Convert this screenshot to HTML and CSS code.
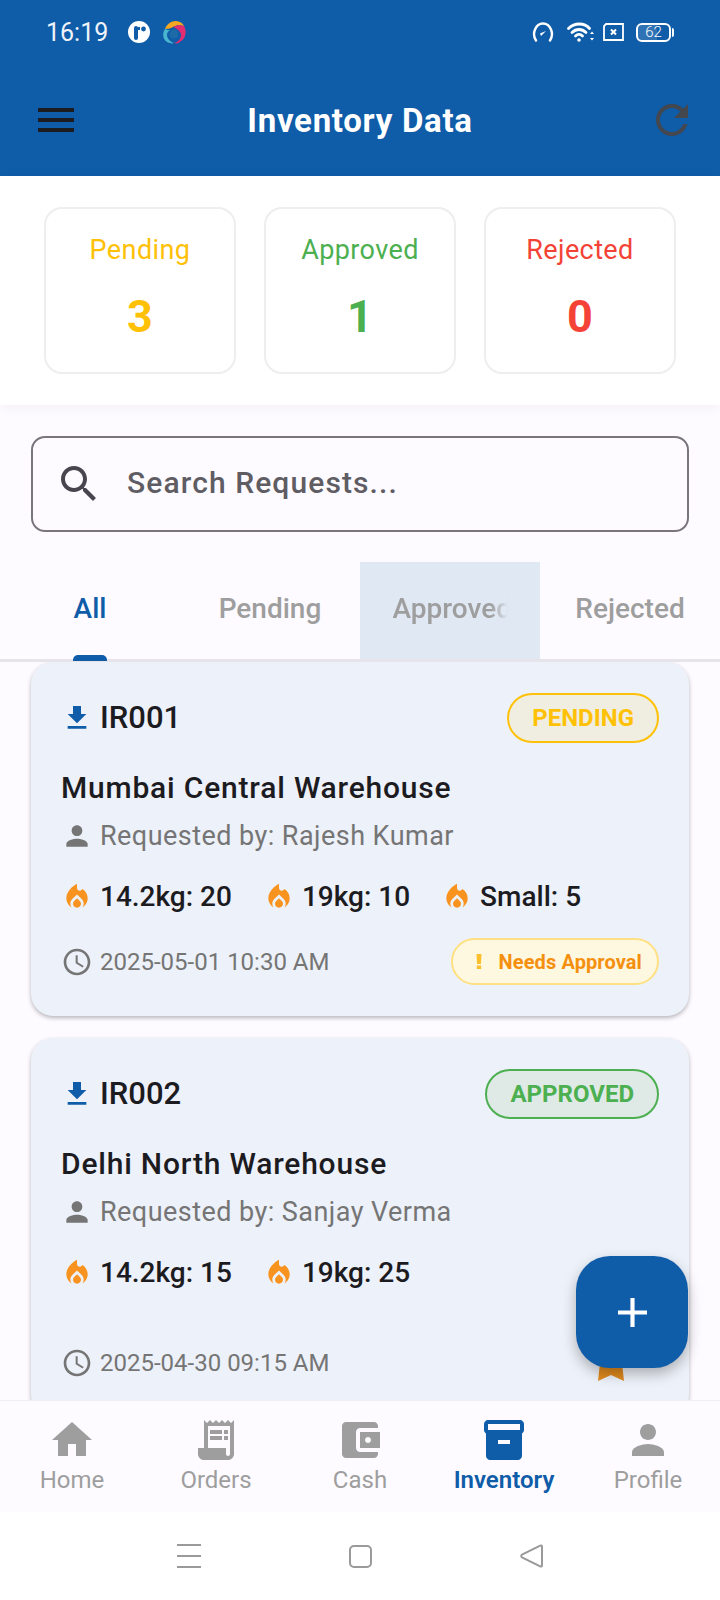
FILE: index.html
```html
<!DOCTYPE html>
<html lang="en">

<head>
  <meta charset="UTF-8" />
  <meta name="viewport" content="width=device-width, initial-scale=1.0" />
  <title>Inventory Data</title>
  <link rel="stylesheet" href="styles.css">
</head>

<body>
  <div class="phone">
    <header class="header">
      <div class="status-bar">
        <span class="status-time">16:19</span>
        <svg class="status-app" viewBox="0 0 22 22">
          <circle cx="11" cy="11" r="11" fill="#fff" />
          <rect x="6" y="5" width="4" height="14" rx="2" fill="#0f5ca8" />
          <path d="M10 6h2v3h-2z" fill="#0f5ca8" />
          <circle cx="15.5" cy="8" r="2.4" fill="#0f5ca8" />
        </svg>
        <svg class="status-app status-app-color" viewBox="0 0 24 24">
          <path d="M3 9C5 3 12-1 18 2c2 1 3 2 4 4-4-1-8-1-11 1-2 1-4 2-8 2z" fill="#f5a623" />
          <path d="M22 6c3 5 2 12-3 15-2 2-4 3-7 2 4-1 7-4 7-8 0-3-3-6-8-8 4-2 8-2 11-1z" fill="#e32d73" />
          <path d="M3 9c-4 6-1 13 5 14 1 .5 3 .5 4 0-3-1-7-4-7-8 0-2 1-4 3-5-2 0-3 0-5-1z" fill="#49b6d0" />
          <circle cx="12" cy="14" r="4.500" fill="#1c6aa6" />
        </svg>
        <div class="status-right">
          <svg class="status-icon status-gauge" viewBox="0 0 22 20" fill="none" stroke="#fff" stroke-width="2.400">
            <path d="M4 18.500C-.5 12 3.500 1.500 11 1.500S22.500 12 18 18.500" stroke-linecap="round" />
            <path d="M8 11.500l6-2.500-5 5z" fill="#fff" stroke="none" />
          </svg>
          <svg class="status-icon status-wifi" viewBox="0 0 28 20" fill="none" stroke="#fff" stroke-width="2.800" stroke-linecap="round">
            <path d="M1.500 6.500c6-6 16-6 21 0" />
            <path d="M5 10.500c4-4 10-4 14 0" />
            <path d="M8.500 14c2-2 5-2 7 0" />
            <circle cx="12" cy="18" r="1.800" fill="#fff" stroke="none" />
            <path d="M25 9.500l2 2.500h-4zM25 18.500l2-2.500h-4z" fill="#fff" stroke="none" />
          </svg>
          <svg class="status-icon status-box" viewBox="0 0 21 18" fill="none" stroke="#fff" stroke-width="1.800">
            <path d="M3 1h17v16H1V3z" />
            <path d="M8 6.500l5 5M13 6.500l-5 5" stroke-width="2" />
          </svg>
          <div class="battery">
            <div class="battery-body">
              <span class="battery-fill"></span>
              <span class="battery-text">62</span>
            </div>
            <span class="battery-tip"></span>
          </div>
        </div>
      </div>
      <div class="app-bar">
        <svg class="icon-48 icon-menu" viewBox="0 0 24 24"><path d="M3 18h18v-2H3v2zm0-5h18v-2H3v2zm0-7v2h18V6H3z" /></svg>
        <h1>Inventory Data</h1>
        <svg class="icon-48 icon-refresh" viewBox="0 0 24 24"><path d="M17.650 6.350C16.200 4.900 14.210 4 12 4c-4.420 0-7.990 3.580-7.990 8s3.570 8 7.990 8c3.730 0 6.840-2.550 7.730-6h-2.080c-.82 2.330-3.040 4-5.650 4-3.310 0-6-2.690-6-6s2.690-6 6-6c1.660 0 3.140.69 4.220 1.780L13 11h7V4l-2.350 2.350z" /></svg>
      </div>
    </header>

    <section class="stats">
      <div class="stat stat-pending">
        <span class="stat-label">Pending</span>
        <strong class="stat-value">3</strong>
      </div>
      <div class="stat stat-approved">
        <span class="stat-label">Approved</span>
        <strong class="stat-value">1</strong>
      </div>
      <div class="stat stat-rejected">
        <span class="stat-label">Rejected</span>
        <strong class="stat-value">0</strong>
      </div>
    </section>

    <div class="search">
      <svg class="icon-48 icon-search" viewBox="0 0 24 24"><path d="M15.500 14h-.79l-.28-.27C15.410 12.590 16 11.110 16 9.500 16 5.910 13.090 3 9.500 3S3 5.910 3 9.500 5.910 16 9.500 16c1.610 0 3.090-.59 4.230-1.570l.27.28v.79l5 4.990L20.490 19l-4.990-5zm-6 0C7.010 14 5 11.990 5 9.500S7.010 5 9.500 5 14 7.010 14 9.500 11.990 14 9.500 14z" /></svg>
      <span class="search-text">Search Requests...</span>
    </div>

    <nav class="tabs">
      <div class="tab tab-active"><span>All</span><i class="tab-indicator"></i></div>
      <div class="tab"><span>Pending</span></div>
      <div class="tab tab-pressed"><span class="tab-fade">Approved</span></div>
      <div class="tab"><span>Rejected</span></div>
    </nav>

    <main class="list">
      <article class="card">
        <div class="card-top">
          <div class="card-id">
            <svg class="icon-32 icon-primary" viewBox="0 0 24 24"><path d="M19 9h-4V3H9v6H5l7 7 7-7zM5 18v2h14v-2H5z" /></svg>
            <span>IR001</span>
          </div>
          <span class="status-badge badge-pending">PENDING</span>
        </div>
        <h2 class="card-title">Mumbai Central Warehouse</h2>
        <div class="card-line">
          <svg class="icon-32 icon-grey" viewBox="0 0 24 24"><path d="M12 12c2.210 0 4-1.790 4-4s-1.790-4-4-4-4 1.790-4 4 1.790 4 4 4zm0 2c-2.670 0-8 1.340-8 4v2h16v-2c0-2.660-5.330-4-8-4z" /></svg>
          <span>Requested by: Rajesh Kumar</span>
        </div>
        <div class="cylinders">
          <div class="cylinder">
            <svg class="icon-32 icon-flame" viewBox="0 0 24 24"><path d="M12 12.900l-2.130 2.090C9.310 15.550 9 16.280 9 17.060 9 18.680 10.350 20 12 20s3-1.320 3-2.940c0-.78-.31-1.520-.87-2.070L12 12.900z" /><path d="M16 6l-.44.55C14.380 8.020 12 7.190 12 5.300V2S4 6 4 13c0 2.920 1.560 5.470 3.890 6.860-.56-.79-.89-1.760-.89-2.800 0-1.320.52-2.560 1.470-3.500L12 10.100l3.530 3.470c.95.93 1.470 2.170 1.470 3.500 0 1.020-.31 1.960-.85 2.750 1.890-1.150 3.290-3.060 3.710-5.300.66-3.510-1.020-6.760-3.860-8.520z" /></svg>
            <span>14.2kg: 20</span>
          </div>
          <div class="cylinder">
            <svg class="icon-32 icon-flame" viewBox="0 0 24 24"><path d="M12 12.900l-2.130 2.090C9.310 15.550 9 16.280 9 17.060 9 18.680 10.350 20 12 20s3-1.320 3-2.940c0-.78-.31-1.520-.87-2.070L12 12.900z" /><path d="M16 6l-.44.55C14.380 8.020 12 7.190 12 5.300V2S4 6 4 13c0 2.920 1.560 5.470 3.890 6.860-.56-.79-.89-1.760-.89-2.800 0-1.320.52-2.560 1.470-3.500L12 10.100l3.530 3.470c.95.93 1.470 2.170 1.470 3.500 0 1.020-.31 1.960-.85 2.750 1.890-1.150 3.290-3.060 3.710-5.300.66-3.510-1.020-6.760-3.860-8.520z" /></svg>
            <span>19kg: 10</span>
          </div>
          <div class="cylinder">
            <svg class="icon-32 icon-flame" viewBox="0 0 24 24"><path d="M12 12.900l-2.130 2.090C9.310 15.550 9 16.280 9 17.060 9 18.680 10.350 20 12 20s3-1.320 3-2.940c0-.78-.31-1.520-.87-2.070L12 12.900z" /><path d="M16 6l-.44.55C14.380 8.020 12 7.190 12 5.300V2S4 6 4 13c0 2.920 1.560 5.470 3.890 6.860-.56-.79-.89-1.760-.89-2.800 0-1.320.52-2.560 1.470-3.500L12 10.100l3.530 3.470c.95.93 1.470 2.170 1.470 3.500 0 1.020-.31 1.960-.85 2.750 1.890-1.150 3.290-3.060 3.710-5.300.66-3.510-1.020-6.760-3.860-8.520z" /></svg>
            <span>Small: 5</span>
          </div>
        </div>
        <div class="card-foot">
          <div class="card-date">
            <svg class="icon-32 icon-grey" viewBox="0 0 24 24"><path d="M11.990 2C6.470 2 2 6.480 2 12s4.470 10 9.990 10C17.520 22 22 17.520 22 12S17.520 2 11.990 2zM12 20c-4.420 0-8-3.580-8-8s3.580-8 8-8 8 3.580 8 8-3.580 8-8 8z" /><path d="M12.500 7H11v6l5.250 3.150.75-1.230-4.500-2.670z" /></svg>
            <span>2025-05-01 10:30 AM</span>
          </div>
          <div class="approval-chip">
            <svg class="chip-icon" viewBox="0 0 6 15"><path d="M.5 0h5L5 10H1zM.8 11.500h4.400V15H.8z" /></svg>
            <span>Needs Approval</span>
          </div>
        </div>
      </article>

      <article class="card">
        <div class="card-top">
          <div class="card-id">
            <svg class="icon-32 icon-primary" viewBox="0 0 24 24"><path d="M19 9h-4V3H9v6H5l7 7 7-7zM5 18v2h14v-2H5z" /></svg>
            <span>IR002</span>
          </div>
          <span class="status-badge badge-approved">APPROVED</span>
        </div>
        <h2 class="card-title">Delhi North Warehouse</h2>
        <div class="card-line">
          <svg class="icon-32 icon-grey" viewBox="0 0 24 24"><path d="M12 12c2.210 0 4-1.790 4-4s-1.790-4-4-4-4 1.790-4 4 1.790 4 4 4zm0 2c-2.670 0-8 1.340-8 4v2h16v-2c0-2.660-5.330-4-8-4z" /></svg>
          <span>Requested by: Sanjay Verma</span>
        </div>
        <div class="cylinders">
          <div class="cylinder">
            <svg class="icon-32 icon-flame" viewBox="0 0 24 24"><path d="M12 12.900l-2.130 2.090C9.310 15.550 9 16.280 9 17.060 9 18.680 10.350 20 12 20s3-1.320 3-2.940c0-.78-.31-1.520-.87-2.070L12 12.900z" /><path d="M16 6l-.44.55C14.380 8.020 12 7.190 12 5.300V2S4 6 4 13c0 2.920 1.560 5.470 3.890 6.860-.56-.79-.89-1.760-.89-2.800 0-1.320.52-2.560 1.470-3.500L12 10.100l3.530 3.470c.95.93 1.470 2.170 1.470 3.500 0 1.020-.31 1.960-.85 2.750 1.890-1.150 3.290-3.060 3.710-5.300.66-3.510-1.020-6.760-3.860-8.520z" /></svg>
            <span>14.2kg: 15</span>
          </div>
          <div class="cylinder">
            <svg class="icon-32 icon-flame" viewBox="0 0 24 24"><path d="M12 12.900l-2.130 2.090C9.310 15.550 9 16.280 9 17.060 9 18.680 10.350 20 12 20s3-1.320 3-2.940c0-.78-.31-1.520-.87-2.070L12 12.900z" /><path d="M16 6l-.44.55C14.380 8.020 12 7.190 12 5.300V2S4 6 4 13c0 2.920 1.560 5.470 3.890 6.860-.56-.79-.89-1.760-.89-2.800 0-1.320.52-2.560 1.470-3.500L12 10.100l3.530 3.470c.95.93 1.470 2.170 1.470 3.500 0 1.020-.31 1.960-.85 2.750 1.890-1.150 3.290-3.060 3.710-5.300.66-3.510-1.020-6.760-3.860-8.520z" /></svg>
            <span>19kg: 25</span>
          </div>
        </div>
        <div class="card-foot card-foot-tall">
          <div class="card-date">
            <svg class="icon-32 icon-grey" viewBox="0 0 24 24"><path d="M11.990 2C6.470 2 2 6.480 2 12s4.470 10 9.990 10C17.520 22 22 17.520 22 12S17.520 2 11.990 2zM12 20c-4.420 0-8-3.580-8-8s3.580-8 8-8 8 3.580 8 8-3.580 8-8 8z" /><path d="M12.500 7H11v6l5.250 3.150.75-1.230-4.500-2.670z" /></svg>
            <span>2025-04-30 09:15 AM</span>
          </div>
          <svg class="ribbon" viewBox="0 0 26 36"><path d="M4 0h18l4 36-13-6-13 6z" /></svg>
        </div>
      </article>
    </main>

    <button class="fab" type="button">
      <svg viewBox="0 0 28 28"><path d="M12 0h4v12h12v4H16v12h-4V16H0v-4h12z" /></svg>
    </button>

    <footer class="bottom-nav">
      <div class="nav-item">
        <svg class="icon-48" viewBox="0 0 24 24"><path d="M10 20v-6h4v6h5v-8h3L12 3 2 12h3v8z" /></svg>
        <span>Home</span>
      </div>
      <div class="nav-item">
        <svg class="icon-48" viewBox="0 0 24 24"><path d="M19.500 3.500 18 2l-1.500 1.500L15 2l-1.500 1.500L12 2l-1.500 1.500L9 2 7.500 3.500 6 2v14H3v3c0 1.660 1.340 3 3 3h12c1.660 0 3-1.340 3-3V2l-1.500 1.500zM19 19c0 .55-.45 1-1 1s-1-.45-1-1v-3H8V5h11v14z" /><path d="M9 7h6v2H9zM16 7h2v2h-2zM9 10h6v2H9zM16 10h2v2h-2z" /></svg>
        <span>Orders</span>
      </div>
      <div class="nav-item">
        <svg class="icon-48" viewBox="0 0 24 24"><path d="M21 18v1c0 1.100-.9 2-2 2H5c-1.110 0-2-.9-2-2V5c0-1.100.89-2 2-2h14c1.100 0 2 .9 2 2v1h-9c-1.110 0-2 .9-2 2v8c0 1.100.89 2 2 2h9zm-9-2h10V8H12v8zm4-2.500c-.83 0-1.500-.67-1.500-1.500s.67-1.500 1.500-1.500 1.500.67 1.500 1.500-.67 1.500-1.500 1.500z" /></svg>
        <span>Cash</span>
      </div>
      <div class="nav-item nav-active">
        <svg class="icon-48" viewBox="0 0 24 24"><path d="M20 2H4c-1 0-2 .9-2 2v3.010c0 .72.43 1.340 1 1.690V20c0 1.100 1.100 2 2 2h14c.9 0 2-.9 2-2V8.700c.57-.35 1-.97 1-1.690V4c0-1.100-1-2-2-2zm-5 12H9v-2h6v2zm5-7H4V4l16-.02V7z" /></svg>
        <span>Inventory</span>
      </div>
      <div class="nav-item">
        <svg class="icon-48" viewBox="0 0 24 24"><path d="M12 12c2.210 0 4-1.790 4-4s-1.790-4-4-4-4 1.790-4 4 1.790 4 4 4zm0 2c-2.670 0-8 1.340-8 4v2h16v-2c0-2.660-5.330-4-8-4z" /></svg>
        <span>Profile</span>
      </div>
    </footer>

    <div class="system-nav">
      <div class="sys-menu"><i></i><i></i><i></i></div>
      <div class="sys-home"></div>
      <svg class="sys-back" viewBox="0 0 24 24"><path d="M22 2.500v19c0 1-1 1.300-1.800.8L2 13.300c-1-.6-1-2 0-2.600L20.200 1.700c.8-.5 1.800-.2 1.800.8z" /></svg>
    </div>
  </div>
</body>

</html>
```

FILE: styles.css
```css
* {
  box-sizing: border-box;
}

body {
  margin: 0;
  font-family: "Roboto", "Liberation Sans", sans-serif;
  background-color: #fdfbff;
  color: #1c1b1f;
}

.phone {
  position: relative;
  width: 720px;
  height: 1600px;
  display: flex;
  flex-direction: column;
  overflow: hidden;
  background-color: #fdfbff;
}

svg {
  display: block;
  flex: none;
}

.icon-48 {
  width: 48px;
  height: 48px;
  fill: currentColor;
}

.icon-32 {
  width: 32px;
  height: 32px;
}

.icon-primary {
  fill: #0f5ca8;
}

.icon-grey {
  fill: #757575;
}

.icon-flame {
  fill: #f7931e;
}

/* Header */
.header {
  flex: none;
  height: 176px;
  background-color: #0f5ca8;
  color: white;
}

.status-bar {
  height: 64px;
  padding: 0 46px 0 46px;
  display: flex;
  align-items: center;
}

.status-time {
  font-size: 25px;
  font-weight: 400;
  color: #eef3fa;
  margin-right: 20px;
}

.status-app {
  width: 22px;
  height: 22px;
  margin-right: 12px;
}

.status-app-color {
  width: 24px;
  height: 24px;
}

.status-right {
  margin-left: auto;
  display: flex;
  align-items: center;
}

.status-gauge {
  width: 22px;
  height: 20px;
  margin-right: 13px;
}

.status-wifi {
  width: 28px;
  height: 20px;
  margin-right: 8px;
}

.status-box {
  width: 21px;
  height: 18px;
  margin-right: 12px;
}

.battery {
  display: flex;
  align-items: center;
}

.battery-body {
  position: relative;
  width: 35px;
  height: 19px;
  border: 2px solid white;
  border-radius: 6px;
  overflow: hidden;
  display: flex;
  align-items: center;
  justify-content: center;
}

.battery-fill {
  position: absolute;
  left: 0;
  top: 0;
  bottom: 0;
  width: 62%;
  background-color: rgba(255, 255, 255, 0.14);
}

.battery-text {
  position: relative;
  font-size: 15px;
  font-weight: 300;
  color: white;
}

.battery-tip {
  width: 2px;
  height: 9px;
  margin-left: 1px;
  background-color: white;
  border-radius: 0 2px 2px 0;
}

.app-bar {
  height: 112px;
  padding: 0 24px 0 32px;
  display: flex;
  align-items: center;
  justify-content: space-between;
}

.app-bar h1 {
  margin: 0 0 0 -8px;
  font-size: 33px;
  font-weight: 700;
  letter-spacing: 0.7px;
}

.icon-menu {
  color: #1c1b1f;
}

.icon-refresh {
  color: #44474e;
}

/* Summary */
.stats {
  flex: none;
  height: 229px;
  padding: 31px 44px;
  display: grid;
  grid-template-columns: repeat(3, 1fr);
  gap: 28px;
  background-color: white;
  box-shadow: 0 2px 12px rgba(0, 0, 0, 0.05);
  position: relative;
}

.stat {
  border: 2px solid #eeeeee;
  border-radius: 18px;
  background: white;
  display: flex;
  flex-direction: column;
  align-items: center;
  padding-top: 24px;
}

.stat-label {
  font-size: 27px;
  line-height: 34px;
  letter-spacing: 0.4px;
}

.stat-value {
  font-size: 45px;
  line-height: 54px;
  margin-top: 23px;
  font-weight: 700;
}

.stat-pending {
  color: #ffc107;
}

.stat-approved {
  color: #4caf50;
}

.stat-rejected {
  color: #f44336;
}

/* Search */
.search {
  flex: none;
  height: 96px;
  margin: 31px 31px 0;
  padding-left: 22px;
  display: flex;
  align-items: center;
  gap: 24px;
  border: 2px solid #79747e;
  border-radius: 14px;
}

.icon-search {
  color: #49454f;
}

.search-text {
  font-size: 30px;
  font-weight: 500;
  letter-spacing: 1.1px;
  color: #5f5d63;
  margin-bottom: 4px;
}

/* Tabs */
.tabs {
  flex: none;
  height: 100px;
  margin-top: 30px;
  display: grid;
  grid-template-columns: repeat(4, 180px);
  border-bottom: 3px solid #e6e4ea;
  font-size: 28px;
  font-weight: 500;
  color: #9e9e9e;
}

.tab {
  position: relative;
  display: flex;
  justify-content: center;
  padding-top: 30px;
}

.tab-active {
  color: #0f5ca8;
}

.tab-pressed {
  background-color: #e0e8f3;
}

.tab-fade {
  display: block;
  width: 115px;
  height: 36px;
  overflow: hidden;
  white-space: nowrap;
  -webkit-mask-image: linear-gradient(to right, black 85%, transparent);
  mask-image: linear-gradient(to right, black 85%, transparent);
}

.tab-indicator {
  position: absolute;
  left: 73px;
  bottom: -2px;
  width: 34px;
  height: 6px;
  background-color: #0f5ca8;
  border-radius: 5px 5px 0 0;
}

/* Requests */
.list {
  flex: 1;
  min-height: 0;
  overflow: hidden;
  padding: 0 31px;
}

.card {
  background-color: #edf1f9;
  border-radius: 22px;
  padding: 31px 30px;
  margin-bottom: 22px;
  box-shadow: 0 2px 4px rgba(0, 0, 0, 0.28);
}

.card-top {
  display: flex;
  align-items: center;
  justify-content: space-between;
}

.card-id {
  display: flex;
  align-items: center;
  gap: 7px;
  font-size: 31px;
  line-height: 36px;
  font-weight: 500;
}

.status-badge {
  height: 50px;
  padding: 0 23px;
  display: flex;
  align-items: center;
  border: 2px solid;
  border-radius: 25px;
  font-size: 24px;
  font-weight: 700;
}

.badge-pending {
  color: #ffc107;
  background-color: #f0eee0;
}

.badge-approved {
  color: #4caf50;
  background-color: #dfeae6;
}

.card-title {
  margin: 25px 0 0;
  font-size: 30px;
  line-height: 40px;
  font-weight: 500;
  letter-spacing: 0.8px;
}

.card-line {
  margin-top: 10px;
  display: flex;
  align-items: center;
  gap: 7px;
  font-size: 27px;
  line-height: 36px;
  letter-spacing: 0.45px;
  color: #757575;
}

.cylinders {
  margin-top: 25px;
  display: flex;
  gap: 31px;
  font-size: 28px;
  line-height: 36px;
  font-weight: 500;
}

.cylinder {
  display: flex;
  align-items: center;
  gap: 7px;
}

.card-foot {
  margin-top: 23px;
  height: 47px;
  display: flex;
  align-items: center;
  justify-content: space-between;
}

.card-foot-tall {
  margin-top: 48px;
}

.card-date {
  display: flex;
  align-items: center;
  gap: 7px;
  font-size: 24px;
  color: #757575;
}

.approval-chip {
  height: 47px;
  padding: 0 15px 0 23px;
  display: flex;
  align-items: center;
  gap: 17px;
  background-color: #fff8e1;
  border: 2px solid #ffe082;
  border-radius: 24px;
  font-size: 20px;
  font-weight: 700;
  letter-spacing: 0.1px;
  color: #f5900f;
}

.chip-icon {
  width: 6px;
  height: 15px;
  fill: #fbc02d;
}

.ribbon {
  width: 26px;
  height: 36px;
  margin-right: 35px;
  fill: #e08a1e;
}

/* Floating button */
.fab {
  position: absolute;
  left: 576px;
  top: 1256px;
  width: 112px;
  height: 112px;
  padding: 0;
  border: none;
  border-radius: 34px;
  background-color: #0f5ca8;
  box-shadow: 0 6px 14px rgba(0, 0, 0, 0.28);
  display: flex;
  align-items: center;
  justify-content: center;
}

.fab svg {
  width: 29px;
  height: 29px;
  fill: white;
}

/* Bottom navigation */
.bottom-nav {
  position: absolute;
  left: 0;
  right: 0;
  top: 1400px;
  height: 112px;
  display: grid;
  grid-template-columns: repeat(5, 1fr);
  background-color: #fdfbff;
  border-top: 1px solid #f0eef3;
  color: #9e9e9e;
}

.nav-item {
  display: flex;
  flex-direction: column;
  align-items: center;
  padding-top: 15px;
  font-size: 24px;
  line-height: 30px;
}

.nav-item span {
  margin-top: 1px;
}

.nav-active {
  color: #0f5ca8;
  font-weight: 600;
}

/* Android buttons */
.system-nav {
  position: absolute;
  left: 0;
  right: 0;
  bottom: 0;
  height: 88px;
  background-color: white;
  display: flex;
  align-items: center;
  justify-content: center;
  gap: 148px;
}

.sys-menu {
  width: 24px;
  height: 24px;
  display: flex;
  flex-direction: column;
  justify-content: space-between;
}

.sys-menu i {
  display: block;
  height: 2px;
  background-color: #9a9a9a;
}

.sys-home {
  width: 23px;
  height: 23px;
  border: 2px solid #9a9a9a;
  border-radius: 5px;
}

.sys-back {
  width: 24px;
  height: 24px;
  fill: none;
  stroke: #9a9a9a;
  stroke-width: 2;
}
```
